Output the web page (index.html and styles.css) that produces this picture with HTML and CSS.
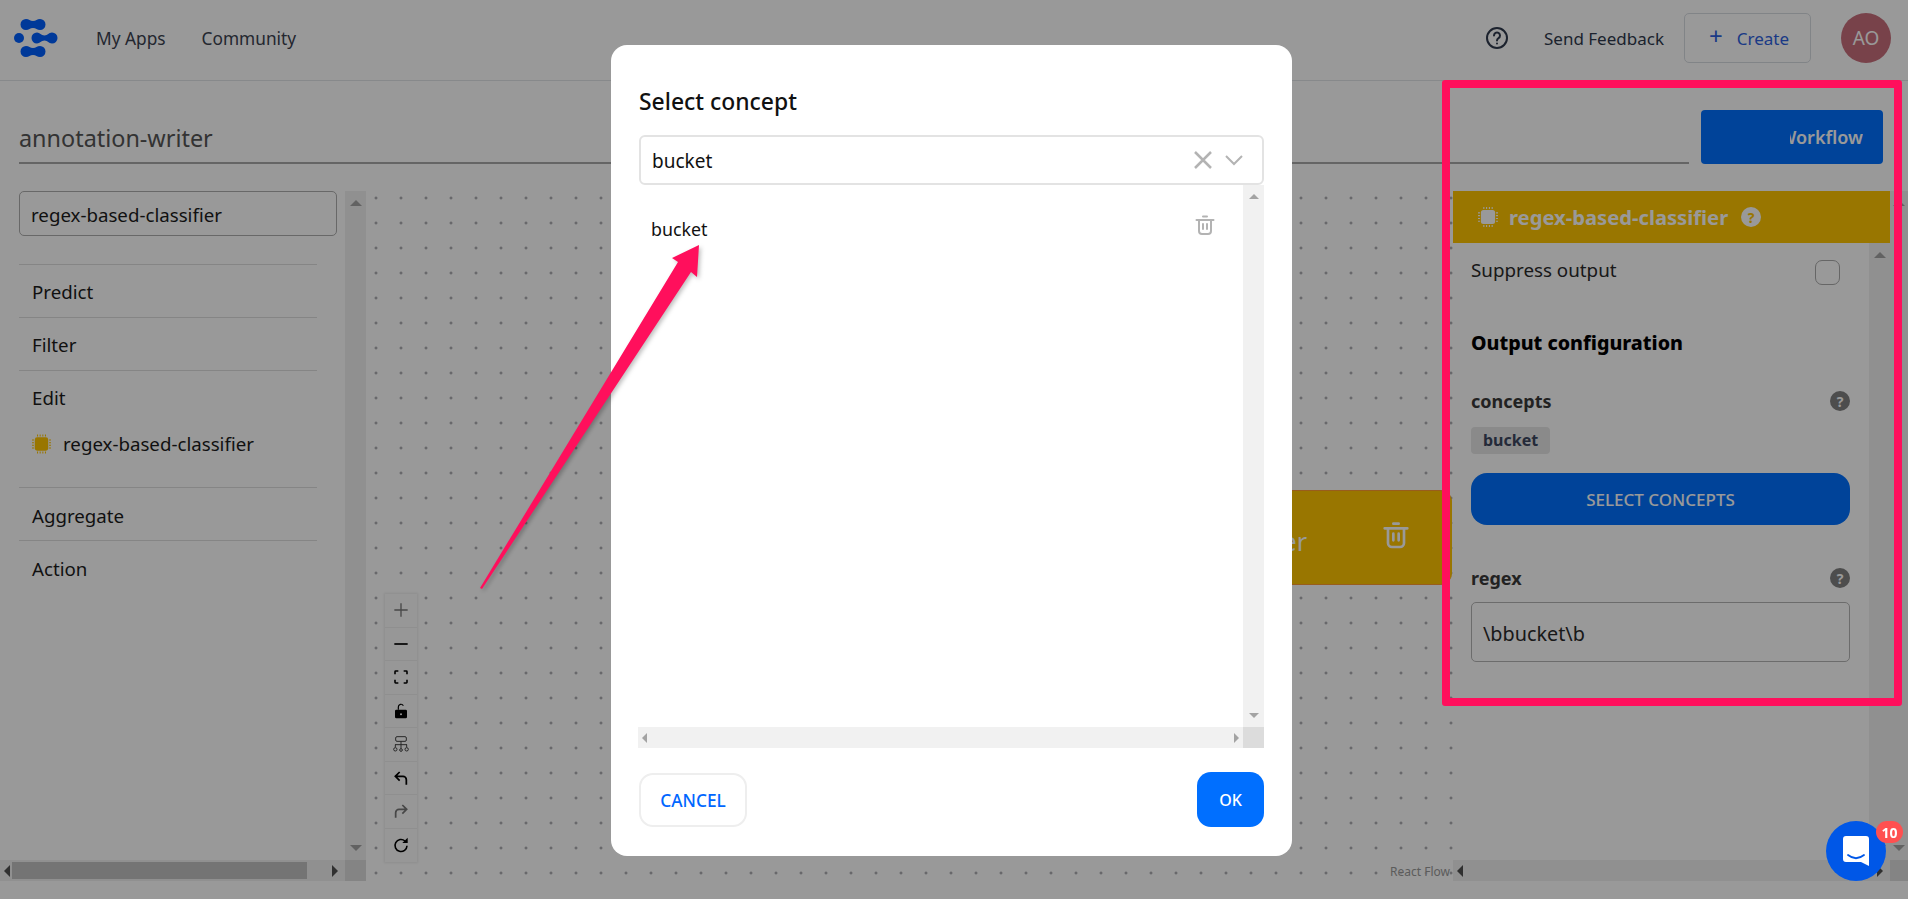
FILE: index.html
```html
<!DOCTYPE html>
<html lang="en">
<head>
    <meta charset="UTF-8">
    <meta name="viewport" content="width=device-width, initial-scale=1.0">
    <title>annotation-writer</title>
    <link rel="stylesheet" href="styles.css">
</head>
<body>

    <svg class="defs" width="0" height="0">
        <symbol id="chip" viewBox="0 0 24 24">
            <rect x="3.500" y="3.500" width="17" height="17" rx="3" fill="currentColor"/>
            <path d="M7 0v2.500M10.300 0v2.500M13.700 0v2.500M17 0v2.500M7 21.500V24M10.300 21.500V24M13.700 21.500V24M17 21.500V24M0 7h2.500M0 10.300h2.500M0 13.700h2.500M0 17h2.500M21.500 7H24M21.500 10.300H24M21.500 13.700H24M21.500 17H24" stroke="currentColor" stroke-width="1.300"/>
        </symbol>
        <symbol id="trash" viewBox="0 0 24 24">
            <path d="M3.500 7h17M6 7v11a3 3 0 0 0 3 3h6a3 3 0 0 0 3-3V7M10 3.500h4M10 11v5M14 11v5" fill="none" stroke="currentColor" stroke-width="2" stroke-linecap="round" stroke-linejoin="round"/>
        </symbol>
    </svg>

    <header class="topbar">
        <svg class="logo" width="46" height="38" viewBox="0 0 46 38">
            <g fill="#005fff">
                <path d="M12 0c3 0 4 2 7 2s4-2 7-2a5.500 5.500 0 0 1 0 11c-3 0-4-2-7-2s-4 2-7 2a5.500 5.500 0 0 1 0-11z"/>
                <circle cx="5" cy="19" r="5"/>
                <path d="M23 13.500c3 0 4 3 7.500 3s4-3 7.500-3a5.500 5.500 0 0 1 0 11c-3.500 0-4-3-7.500-3s-4.500 3-7.500 3a5.500 5.500 0 0 1 0-11z"/>
                <path d="M12 27c3 0 4 2 7 2s4-2 7-2a5.500 5.500 0 0 1 0 11c-3 0-4-2-7-2s-4 2-7 2a5.500 5.500 0 0 1 0-11z"/>
            </g>
        </svg>
        <nav class="topnav">
            <a>My Apps</a>
            <a>Community</a>
        </nav>
        <div class="topbar-right">
            <svg class="help" width="24" height="24" viewBox="0 0 24 24" fill="none" stroke="#2f3a4d" stroke-width="2" stroke-linecap="round">
                <circle cx="12" cy="12" r="10"/>
                <path d="M9 9.500a3 3 0 1 1 4.500 2.600c-1 .6-1.500 1.200-1.500 2.400"/>
                <path d="M12 17.500v.1"/>
            </svg>
            <span class="feedback">Send Feedback</span>
            <button class="create-btn"><span class="plus">+</span>Create</button>
            <div class="avatar">AO</div>
        </div>
    </header>

    <div class="title-row">
        <div class="app-name">annotation-writer</div>
        <button class="workflow-btn"><span class="workflow-label">Workflow</span></button>
    </div>

    <div class="workspace">
        <aside class="sidebar">
            <div class="sidebar-main">
                <div class="sidebar-content">
                    <div class="search-box">regex-based-classifier</div>
                    <ul class="menu">
                        <li>Predict</li>
                        <li>Filter</li>
                        <li class="menu-open">
                            Edit
                            <div class="menu-child">
                                <svg class="chip-icon" width="19" height="20"><use href="#chip"/></svg>
                                regex-based-classifier
                            </div>
                        </li>
                        <li class="menu-low">Aggregate</li>
                        <li class="menu-low">Action</li>
                    </ul>
                </div>
                <div class="vscroll"><i class="arrow-up"></i><i class="arrow-down"></i></div>
            </div>
            <div class="hscroll hscroll-side">
                <i class="arrow-left"></i>
                <div class="hthumb"></div>
                <i class="arrow-right"></i>
                <div class="corner"></div>
            </div>
        </aside>

        <div class="canvas">
            <div class="node">
                <span class="node-name">regex-based-classifier</span>
                <svg class="node-trash" width="32" height="32"><use href="#trash"/></svg>
            </div>

            <div class="controls">
                <button class="off"><svg viewBox="0 0 24 24"><path d="M12 2v20M2 12h20" stroke="currentColor" stroke-width="2" fill="none"/></svg></button>
                <button><svg viewBox="0 0 24 24"><path d="M2 12h20" stroke="currentColor" stroke-width="2.500" fill="none"/></svg></button>
                <button><svg viewBox="0 0 24 24"><path d="M3 8V4a1 1 0 0 1 1-1h4M16 3h4a1 1 0 0 1 1 1v4M21 16v4a1 1 0 0 1-1 1h-4M8 21H4a1 1 0 0 1-1-1v-4" stroke="currentColor" stroke-width="2.400" fill="none"/></svg></button>
                <button><svg viewBox="0 0 24 24"><path d="M8 10V6a4 4 0 0 1 7.500-2" stroke="currentColor" stroke-width="1.800" fill="none"/><path fill-rule="evenodd" d="M5 10h14a2 2 0 0 1 2 2v9a2 2 0 0 1-2 2H5a2 2 0 0 1-2-2v-9a2 2 0 0 1 2-2zm7 5.500a1.500 1.500 0 1 0 0 3 1.500 1.500 0 0 0 0-3z" fill="currentColor"/></svg></button>
                <button class="tree"><svg viewBox="0 0 24 24" fill="none" stroke="currentColor" stroke-width="1.500"><rect x="4" y="1" width="16" height="7" rx="2"/><path d="M12 8v11M3 13h18M3.500 13v4M20.500 13v4"/><circle cx="3.500" cy="20" r="2.500"/><circle cx="12" cy="21" r="2"/><circle cx="20.500" cy="20" r="2.500"/></svg></button>
                <button><svg viewBox="0 0 24 24"><path d="M10 3L3.500 9.500 10 16M4 9.500h11a5 5 0 0 1 5 5V22" stroke="currentColor" stroke-width="2.600" fill="none"/></svg></button>
                <button class="off"><svg viewBox="0 0 24 24"><path d="M14 3l6.500 6.500L14 16M20 9.500H9a5 5 0 0 0-5 5V22" stroke="currentColor" stroke-width="2.600" fill="none"/></svg></button>
                <button><svg viewBox="0 0 24 24"><path d="M21 13a9 9 0 1 1-3-7" stroke="currentColor" stroke-width="2.400" fill="none"/><path d="M22 1v8h-8z" fill="currentColor"/></svg></button>
            </div>

            <div class="attribution">React Flow</div>
        </div>

        <aside class="panel">
            <div class="panel-main">
                <div class="panel-inner">
                    <div class="panel-head">
                        <svg class="panel-chip" width="20" height="22"><use href="#chip"/></svg>
                        <span>regex-based-classifier</span>
                        <span class="hint hint-light">?</span>
                    </div>
                    <div class="panel-scrollarea">
                        <div class="panel-body">
                            <div class="suppress-row">
                                <span>Suppress output</span>
                                <span class="checkbox"></span>
                            </div>
                            <h3 class="section-title">Output configuration</h3>
                            <div class="field-head field-concepts">
                                <span>concepts</span>
                                <span class="hint">?</span>
                            </div>
                            <span class="tag">bucket</span>
                            <button class="select-btn">SELECT CONCEPTS</button>
                            <div class="field-head field-regex">
                                <span>regex</span>
                                <span class="hint">?</span>
                            </div>
                            <div class="regex-input">\bbucket\b</div>
                        </div>
                        <div class="vscroll vscroll-inner"><i class="arrow-up"></i><i class="arrow-down"></i></div>
                    </div>
                </div>
                <div class="vscroll vscroll-outer"><i class="arrow-up"></i><i class="arrow-down"></i></div>
            </div>
            <div class="hscroll">
                <i class="arrow-left"></i>
                <i class="arrow-right"></i>
                <div class="corner corner-wide"></div>
            </div>
        </aside>
    </div>

    <div class="overlay"></div>

    <div class="modal">
        <h2>Select concept</h2>
        <div class="concept-select">
            <span>bucket</span>
            <svg class="select-x" width="20" height="20" viewBox="0 0 20 20"><path d="M2 2l16 16M18 2L2 18" stroke="#b3b3b3" stroke-width="2.500" fill="none"/></svg>
            <svg class="select-chevron" width="20" height="20" viewBox="0 0 20 20"><path d="M2 6l8 8 8-8" stroke="#b3b3b3" stroke-width="2" fill="none"/></svg>
        </div>
        <div class="concept-list">
            <div class="concept-list-main">
                <div class="concept-items">
                    <div class="concept-item">
                        <span>bucket</span>
                        <svg class="item-trash" width="24" height="24"><use href="#trash"/></svg>
                    </div>
                </div>
                <div class="vscroll vscroll-modal"><i class="arrow-up"></i><i class="arrow-down"></i></div>
            </div>
            <div class="hscroll hscroll-modal">
                <i class="arrow-left"></i>
                <i class="arrow-right"></i>
                <div class="corner"></div>
            </div>
        </div>
        <div class="modal-actions">
            <button class="cancel-btn">CANCEL</button>
            <button class="ok-btn">OK</button>
        </div>
    </div>

    <div class="highlight"></div>

    <svg class="pointer" width="1908" height="899" viewBox="0 0 1908 899">
        <polygon points="480,588 678,262 672,258 699,245 697,277 691,272 482,589" fill="#ff0f5c"/>
    </svg>

    <button class="chat">
        <svg width="26" height="30" viewBox="0 0 26 30">
            <path d="M3 0h20a3 3 0 0 1 3 3v27l-8-4H3a3 3 0 0 1-3-3V3a3 3 0 0 1 3-3z" fill="#fff"/>
            <path d="M5 19c5 4 11 4 16 0" stroke="#0057e7" stroke-width="1.800" fill="none" stroke-linecap="round"/>
        </svg>
        <span class="chat-badge">10</span>
    </button>

</body>
</html>
```

FILE: styles.css
```css
* {
    box-sizing: border-box;
}
html, body {
    margin: 0;
    height: 100%;
}
body {
    width: 1908px;
    height: 899px;
    overflow: hidden;
    background-color: #fff;
    color: #2b2b2b;
    font-family: "Noto Sans", sans-serif;
    font-size: 17px;
}
button {
    font-family: inherit;
    border: none;
    cursor: pointer;
}
i {
    display: block;
}
.defs {
    position: absolute;
}

/* top bar */
.topbar {
    display: flex;
    align-items: center;
    height: 81px;
    padding: 0 17px 4px 14px;
    border-bottom: 1px solid #e2e4e8;
}
.logo {
    flex: none;
}
.topnav {
    display: flex;
    gap: 36px;
    margin-left: 36px;
    color: #3b4250;
    font-size: 17.300px;
}
.topbar-right {
    display: flex;
    align-items: center;
    margin-left: auto;
}
.help {
    margin-right: 35px;
}
.feedback {
    margin-right: 20px;
    color: #2f3a4d;
}
.create-btn {
    display: flex;
    align-items: center;
    justify-content: center;
    gap: 14px;
    width: 127px;
    height: 50px;
    padding: 0 0 0 3px;
    background: #fff;
    border: 1px solid #d8dce2;
    border-radius: 5px;
    color: #2d5fe0;
    font-size: 17px;
}
.plus {
    font-size: 24px;
    line-height: 1;
    margin-top: -5px;
}
.avatar {
    display: flex;
    align-items: center;
    justify-content: center;
    width: 50px;
    height: 50px;
    margin-left: 30px;
    border-radius: 50%;
    background-color: #c96f7c;
    color: #fff;
    font-size: 19px;
}

/* title row */
.title-row {
    display: flex;
    align-items: flex-end;
    gap: 12px;
    height: 110px;
    padding: 28px 25px 27px 19px;
}
.app-name {
    flex: 1;
    height: 54px;
    line-height: 56px;
    border-bottom: 2px solid #a8a8a8;
    color: #555;
    font-size: 23.400px;
}
.workflow-btn {
    display: flex;
    justify-content: flex-end;
    width: 182px;
    height: 54px;
    padding: 0 20px 0 0;
    align-items: center;
    background-color: #0071ff;
    border-radius: 4px;
}
.workflow-label {
    width: 73px;
    overflow: hidden;
    direction: rtl;
    color: #fff;
    font-size: 18px;
    font-weight: 600;
    white-space: nowrap;
}

/* main area */
.workspace {
    display: flex;
    height: 690px;
}
.sidebar {
    display: flex;
    flex-direction: column;
    width: 366px;
    flex: none;
}
.sidebar-main {
    display: flex;
    flex: 1;
}
.sidebar-content {
    width: 345px;
    padding-left: 19px;
    font-size: 18.700px;
}
.search-box {
    width: 318px;
    height: 45px;
    padding-left: 11px;
    line-height: 45px;
    border: 1px solid #adadad;
    border-radius: 5px;
    color: #1c1c1c;
}
.menu {
    width: 298px;
    margin: 28px 0 0;
    padding: 0;
    list-style: none;
}
.menu li {
    height: 53px;
    padding-left: 13px;
    line-height: 53px;
    border-top: 1px solid #dedede;
    color: #1c1c1c;
}
.menu li.menu-open {
    height: 117px;
}
.menu li.menu-low {
    line-height: 55px;
}
.menu-child {
    display: flex;
    align-items: center;
    gap: 12px;
    height: 40px;
    margin-top: 0;
    line-height: 40px;
}
.chip-icon {
    color: #ffc500;
}

/* fake scrollbars */
.vscroll {
    display: flex;
    flex-direction: column;
    justify-content: space-between;
    align-items: center;
    flex: none;
    width: 21px;
    padding: 9px 0;
    background-color: #f1f1f1;
}
.hscroll {
    position: relative;
    display: flex;
    justify-content: space-between;
    align-items: center;
    flex: none;
    height: 21px;
    padding: 0 25px 0 4px;
    background-color: #f1f1f1;
}
.hscroll-side {
    padding-right: 28px;
}
.arrow-up, .arrow-down {
    width: 0;
    height: 0;
    border-left: 6px solid transparent;
    border-right: 6px solid transparent;
}
.arrow-up {
    border-bottom: 6px solid #a3a3a3;
}
.arrow-down {
    border-top: 6px solid #a3a3a3;
}
.arrow-left, .arrow-right {
    width: 0;
    height: 0;
    border-top: 6px solid transparent;
    border-bottom: 6px solid transparent;
}
.arrow-left {
    border-right: 6px solid #505050;
}
.arrow-right {
    border-left: 6px solid #505050;
}
.hthumb {
    width: 295px;
    height: 17px;
    margin: 0 auto 0 2px;
    background-color: #c1c1c1;
}
.corner {
    position: absolute;
    top: 0;
    right: 0;
    bottom: 0;
    width: 21px;
    background-color: #dcdcdc;
}
.corner-wide {
    width: 18px;
}

/* canvas */
.canvas {
    position: relative;
    flex: 1;
    overflow: hidden;
    background-image: radial-gradient(circle, #91919a 1.2px, transparent 1.3px);
    background-size: 25px 25px;
    background-position: -2.5px -5.5px;
}
.node {
    position: absolute;
    top: 299px;
    right: 1px;
    display: flex;
    align-items: center;
    justify-content: flex-end;
    width: 480px;
    height: 95px;
    padding-right: 40px;
    background-color: #ffc500;
    border-top: 1px solid #ff9b30;
    border-bottom: 1px solid #ff9b30;
    border-radius: 12px;
    color: #fff;
}
.node-name {
    margin: 6px 73px 0 0;
    font-size: 25px;
    white-space: nowrap;
}
.node-trash {
    margin-top: -6px;
}
.controls {
    position: absolute;
    left: 19px;
    bottom: 19px;
    display: flex;
    flex-direction: column;
    width: 32px;
    background-color: #fcfcfc;
    box-shadow: 0 0 2px 1px rgba(0, 0, 0, 0.08);
}
.controls button {
    display: flex;
    align-items: center;
    justify-content: center;
    height: 33.500px;
    padding: 0;
    background: transparent;
    border-bottom: 1px solid #eee;
    color: #000;
}
.controls button:last-child {
    border-bottom: none;
}
.controls button.off {
    color: #777;
}
.controls button.tree {
    color: #444;
}
.controls svg {
    width: 16px;
    height: 16px;
}
.attribution {
    position: absolute;
    right: 3px;
    bottom: 1px;
    color: #999;
    font-size: 12px;
    background-color: rgba(255, 255, 255, 0.5);
}

/* right panel */
.panel {
    display: flex;
    flex-direction: column;
    width: 455px;
    flex: none;
    background-color: #fff;
}
.panel-main {
    display: flex;
    flex: 1;
    min-height: 0;
}
.panel-inner {
    display: flex;
    flex-direction: column;
    flex: 1;
}
.panel-head {
    display: flex;
    align-items: center;
    height: 52px;
    padding-left: 25px;
    background-color: #ffc500;
    color: #fff;
    font-size: 20.200px;
    font-weight: 700;
}
.panel-chip {
    margin-right: 11px;
}
.hint {
    display: flex;
    align-items: center;
    justify-content: center;
    width: 20px;
    height: 20px;
    border-radius: 50%;
    background-color: #808080;
    color: #fff;
    font-size: 14px;
    font-weight: 700;
}
.hint-light {
    margin-left: 13px;
    background-color: #fff;
    color: #ffc500;
}
.panel-scrollarea {
    display: flex;
    flex: 1;
}
.panel-body {
    flex: 1;
    padding: 0 19px 0 18px;
}
.vscroll-outer {
    width: 18px;
}
.suppress-row {
    display: flex;
    align-items: center;
    justify-content: space-between;
    height: 54px;
    padding-right: 10px;
    font-size: 18.800px;
}
.checkbox {
    width: 25px;
    height: 25px;
    border: 1px solid #aaa;
    border-radius: 7px;
    margin-top: 4px;
}
.section-title {
    margin: 33px 0 0;
    height: 26px;
    color: #000;
    font-size: 19.600px;
    font-weight: 800;
    line-height: 26px;
}
.field-head {
    display: flex;
    justify-content: space-between;
    align-items: center;
    height: 26px;
    color: #3a3a3a;
    font-size: 18px;
    font-weight: 700;
}
.field-concepts {
    margin-top: 32px;
}
.tag {
    display: inline-block;
    height: 27px;
    margin-top: 13px;
    padding: 0 12px;
    line-height: 27px;
    background-color: #e7e7e7;
    border-radius: 4px;
    color: #3c4760;
    font-size: 16px;
    font-weight: 700;
}
.select-btn {
    display: block;
    width: 100%;
    height: 52px;
    margin-top: 19px;
    background-color: #0071ff;
    border-radius: 16px;
    color: #fff;
    font-size: 17px;
    font-weight: 500;
}
.field-regex {
    margin-top: 40px;
}
.regex-input {
    height: 60px;
    margin-top: 11px;
    padding-left: 11px;
    line-height: 62px;
    border: 1px solid #b5b5b5;
    border-radius: 5px;
    font-size: 19.800px;
}

/* dim layer and dialog */
.overlay {
    position: fixed;
    inset: 0;
    background-color: rgba(0, 0, 0, 0.4);
}
.modal {
    position: fixed;
    left: 611px;
    top: 45px;
    display: flex;
    flex-direction: column;
    width: 681px;
    height: 811px;
    padding: 0 28px 0 27px;
    background-color: #fff;
    border-radius: 16px;
    color: #111;
}
.modal h2 {
    margin: 38px 0 15px 1px;
    height: 37px;
    line-height: 37px;
    color: #111;
    font-size: 22.900px;
    font-weight: 500;
}
.concept-select {
    display: flex;
    align-items: center;
    flex: none;
    height: 50px;
    margin-left: 1px;
    padding: 1px 18px 0 11px;
    border: 2px solid #e3e3e3;
    border-radius: 6px;
    font-size: 19px;
}
.select-x {
    margin: -1px 0 0 auto;
}
.select-chevron {
    margin: -1px 0 0 11px;
}
.concept-list {
    display: flex;
    flex-direction: column;
    height: 563px;
}
.concept-list-main {
    display: flex;
    flex: 1;
}
.concept-items {
    flex: 1;
}
.concept-item {
    display: flex;
    justify-content: space-between;
    padding: 32px 26px 0 13px;
    font-size: 17.800px;
}
.item-trash {
    color: #b3b3b3;
    margin-top: -4px;
}
.modal .arrow-up, .modal .arrow-down, .modal .arrow-left, .modal .arrow-right {
    border-width: 5px;
}
.modal .arrow-up {
    border-bottom-color: #a3a3a3;
    border-top: none;
}
.modal .arrow-down {
    border-top-color: #a3a3a3;
    border-bottom: none;
}
.modal .arrow-left {
    border-right-color: #a3a3a3;
    border-left: none;
}
.modal .arrow-right {
    border-left-color: #a3a3a3;
    border-right: none;
}
.modal-actions {
    display: flex;
    justify-content: space-between;
    align-items: flex-end;
    margin: 24px 0 0 1px;
}
.cancel-btn {
    width: 108px;
    height: 54px;
    background: #fff;
    border: 2px solid #eee;
    border-radius: 14px;
    color: #0066ff;
    font-size: 17.300px;
    font-weight: 500;
}
.ok-btn {
    width: 67px;
    height: 55px;
    background-color: #006fff;
    border-radius: 14px;
    color: #fff;
    font-size: 16px;
    font-weight: 500;
}

/* annotations drawn over the screenshot */
.highlight {
    position: fixed;
    left: 1442px;
    top: 80px;
    width: 460px;
    height: 626px;
    border: 8px solid #ff0f5c;
    border-radius: 3px;
}
.pointer {
    position: fixed;
    left: 0;
    top: 0;
    pointer-events: none;
    filter: drop-shadow(2px 2px 2px rgba(0, 0, 0, 0.25));
}

/* chat launcher */
.chat {
    position: fixed;
    left: 1826px;
    top: 821px;
    display: flex;
    align-items: center;
    justify-content: center;
    width: 60px;
    height: 60px;
    padding: 0;
    background-color: #0057e7;
    border-radius: 50%;
}
.chat-badge {
    position: absolute;
    top: 0;
    right: -17px;
    display: flex;
    align-items: center;
    justify-content: center;
    width: 27px;
    height: 22px;
    background-color: #ff5050;
    border-radius: 11px;
    color: #fff;
    font-size: 14px;
    font-weight: 700;
}
```
